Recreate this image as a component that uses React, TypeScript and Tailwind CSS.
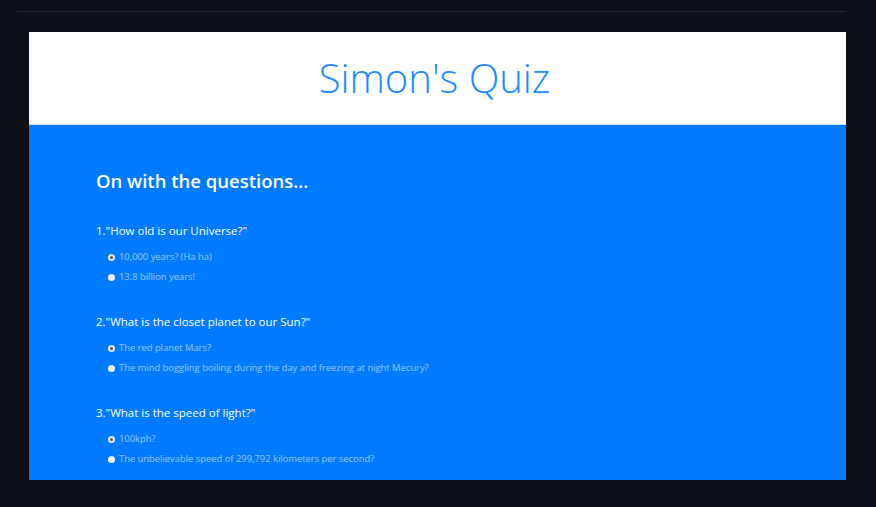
import React from "react";

type Question = { text: string; options: string[] };

const questions: Question[] = [
  { text: '1."How old is our Universe?"', options: ["10,000 years? (Ha ha)", "13.8 billion years!"] },
  {
    text: '2."What is the closet planet to our Sun?"',
    options: ["The red planet Mars?", "The mind boggling boiling during the day and freezing at night Mecury?"],
  },
  {
    text: '3."What is the speed of light?"',
    options: ["100kph?", "The unbelievable speed of 299,792 kilometers per second?"],
  },
];

function Radio({ checked }: { checked: boolean }) {
  return checked ? (
    <span className="w-[7px] h-[7px] rounded-full bg-[#e8e8e8] flex items-center justify-center shrink-0">
      <span className="w-[3px] h-[3px] rounded-full bg-[#555]" />
    </span>
  ) : (
    <span className="w-[7px] h-[7px] rounded-full bg-[#f2f2f2] shrink-0" />
  );
}

export default function App() {
  return (
    <div className="w-[876px] h-[507px] bg-[#0d1017] pt-[11px] font-['Open_Sans',sans-serif]">
      <div className="h-px ml-[17px] mr-[30px] bg-[#23272f]" />
      <div className="ml-[29px] mr-[30px] mt-[20px]">
        <div className="h-[92px] bg-white flex items-center justify-center pr-[6px]">
          <h1 className="text-[40px] font-light text-[#1a8cff]">Simon's Quiz</h1>
        </div>
        <div className="h-px bg-[#cfe3fb]" />
        <div className="h-[355px] bg-[#007bff] pl-[67px] pt-[42px]">
          <h2 className="text-[18.5px] leading-[28px] font-semibold text-white">On with the questions...</h2>
          <div className="mt-[27px] flex flex-col gap-[29px]">
            {questions.map((q, i) => (
              <div key={i}>
                <p className="text-[11.5px] leading-[18px] text-white">{q.text}</p>
                <div className="mt-[10px] pl-[12px] flex flex-col gap-[6px]">
                  {q.options.map((o, j) => (
                    <label key={j} className="flex items-center gap-[4px] h-[14px]">
                      <Radio checked={j === 0} />
                      <span className="text-[9.4px] text-white/55">{o}</span>
                    </label>
                  ))}
                </div>
              </div>
            ))}
          </div>
        </div>
      </div>
    </div>
  );
}
